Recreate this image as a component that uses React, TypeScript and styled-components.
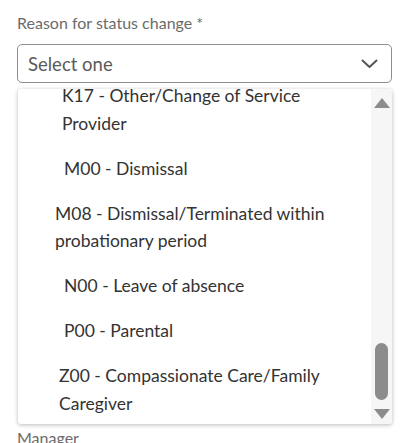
import React from "react"
import styled, { createGlobalStyle } from "styled-components"

const GlobalStyle = createGlobalStyle`
    html, body {
        margin: 0;
        padding: 0;
        background: #ffffff;
    }
    body {
        font-family: Lato, "Noto Sans", "DejaVu Sans", sans-serif;
        overflow: hidden;
    }
`

const Form = styled.div`
    width: 375px;
    padding: 13px 0 0 17px;
`

const FieldLabel = styled.div`
    font-size: 16px;
    line-height: 20px;
    color: #6b6b6b;
    height: 20px;
`

const SelectBox = styled.div`
    margin-top: 11px;
    height: 37px;
    border: 1px solid #8e8e8e;
    border-radius: 5px;
    display: flex;
    align-items: center;
    justify-content: space-between;
    padding: 0 13px 0 10px;
    color: #5a5a5a;
    font-size: 18.5px;
`

const Chevron = () => (
    <svg width="17" height="10" viewBox="0 0 17 10">
        <path d="M1.5 1.5 L8.5 8 L15.5 1.5" fill="none" stroke="#555" strokeWidth="2" strokeLinecap="round" strokeLinejoin="round" />
    </svg>
)

const Dropdown = styled.div`
    margin: 6px 0 0 1px;
    width: 374px;
    height: 335px;
    display: flex;
    background: #ffffff;
    border-radius: 3px;
    box-shadow: 0 1px 4px rgba(0, 0, 0, 0.28);
    overflow: hidden;
`

const OptionsViewport = styled.div`
    flex: 1;
    overflow: hidden;
`

const OptionsList = styled.ul`
    list-style: none;
    margin: -15.5px 0 0 0;
    padding: 0;
`

const Option = styled.li<{ $indent: number }>`
    padding: 8.75px 22px 8.75px ${p => p.$indent}px;
    font-size: 17.5px;
    line-height: 27.5px;
    color: #333333;
`

const ScrollBar = styled.div`
    width: 21px;
    background: #f6f6f6;
    display: flex;
    flex-direction: column;
    align-items: center;
    padding: 9px 0 5px;
`

const Arrow = styled.div<{ $down?: boolean }>`
    width: 0;
    height: 0;
    border-left: 8px solid transparent;
    border-right: 8px solid transparent;
    ${p => p.$down
        ? "border-top: 10px solid #8c8c8c;"
        : "border-bottom: 10px solid #8c8c8c;"}
`

const Track = styled.div`
    flex: 1;
    width: 100%;
    display: flex;
    flex-direction: column;
    justify-content: flex-end;
    align-items: center;
    padding-bottom: 9px;
`

const Thumb = styled.div`
    width: 13px;
    height: 57px;
    border-radius: 7px;
    background: #8c8c8c;
`

const NextLabel = styled(FieldLabel)`
    margin-top: 4px;
`

const options = [
    { code: "K17", text: "Other/Change of Service Provider", indent: 44 },
    { code: "M00", text: "Dismissal", indent: 46 },
    { code: "M08", text: "Dismissal/Terminated within probationary period", indent: 37 },
    { code: "N00", text: "Leave of absence", indent: 46 },
    { code: "P00", text: "Parental", indent: 46 },
    { code: "Z00", text: "Compassionate Care/Family Caregiver", indent: 41 },
]

export default function App() {
    return <>
        <GlobalStyle />
        <Form>
            <FieldLabel>Reason for status change *</FieldLabel>
            <SelectBox>
                <span>Select one</span>
                <Chevron />
            </SelectBox>
            <Dropdown>
                <OptionsViewport>
                    <OptionsList>
                        {options.map(o =>
                            <Option key={o.code} $indent={o.indent}>{o.code} - {o.text}</Option>
                        )}
                    </OptionsList>
                </OptionsViewport>
                <ScrollBar>
                    <Arrow />
                    <Track><Thumb /></Track>
                    <Arrow $down />
                </ScrollBar>
            </Dropdown>
            <NextLabel>Manager</NextLabel>
        </Form>
    </>
}
